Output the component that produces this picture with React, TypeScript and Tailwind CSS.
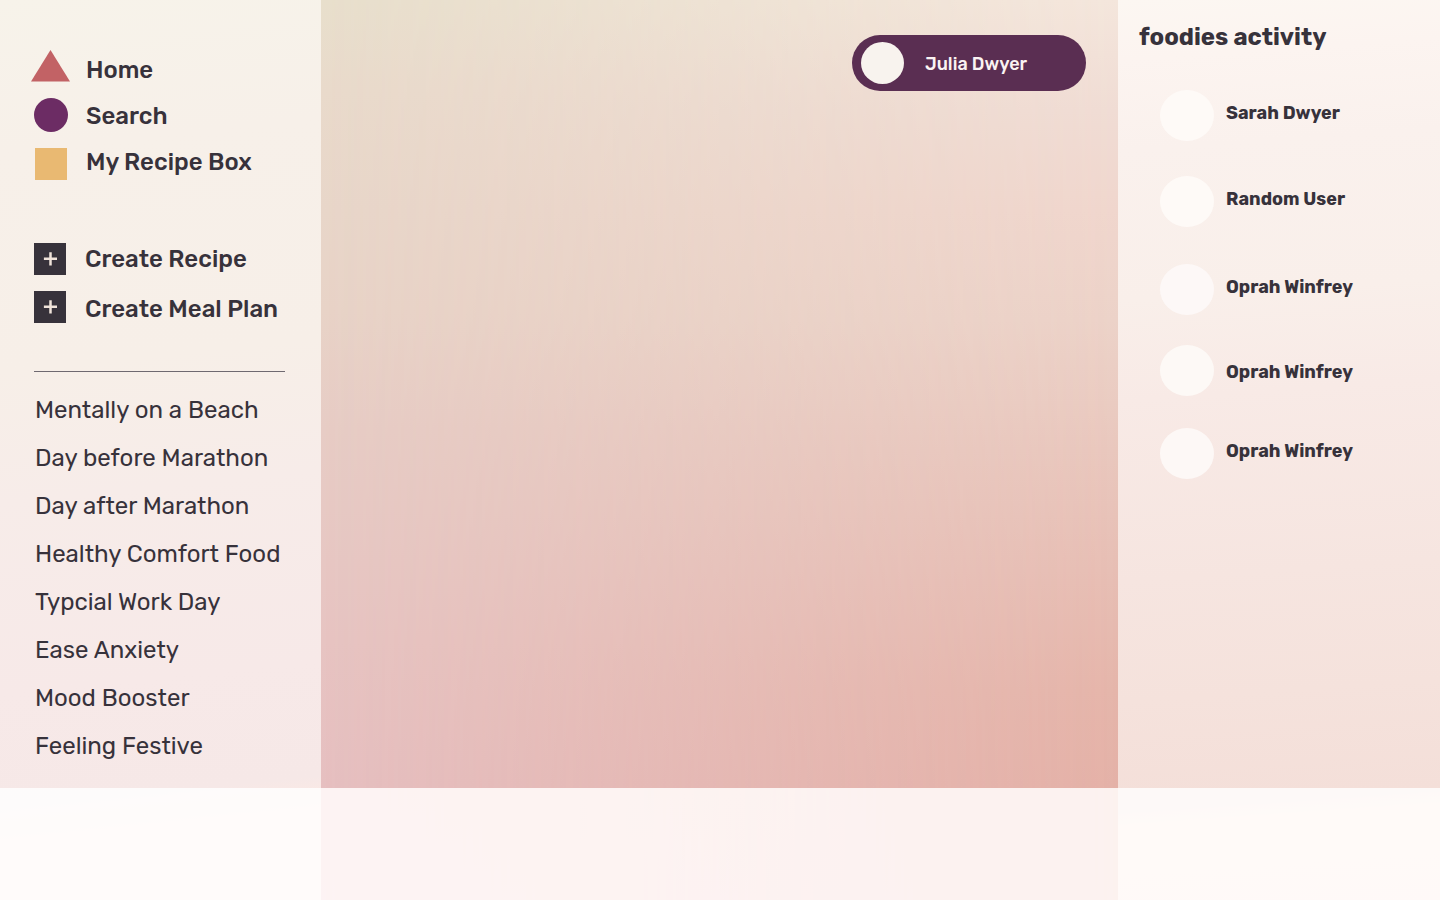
const primary = ["Home", "Search", "My Recipe Box"];

const create = ["Create Recipe", "Create Meal Plan"];

const collections = [
  "Mentally on a Beach",
  "Day before Marathon",
  "Day after Marathon",
  "Healthy Comfort Food",
  "Typcial Work Day",
  "Ease Anxiety",
  "Mood Booster",
  "Feeling Festive",
];

const friends = [
  { name: "Sarah Dwyer", row: "mt-[38px]", text: "mt-[11px]", avatar: "bg-[#fefaf7]" },
  { name: "Random User", row: "mt-[35px]", text: "mt-[11px]", avatar: "bg-[#fefaf7]" },
  { name: "Oprah Winfrey", row: "mt-[37px]", text: "mt-[11px]", avatar: "bg-[#fdf8f7]" },
  { name: "Oprah Winfrey", row: "mt-[30px]", text: "mt-[15px]", avatar: "bg-[#fdf9f6]" },
  { name: "Oprah Winfrey", row: "mt-[32px]", text: "mt-[11px]", avatar: "bg-[#fdf8f6]" },
];

function PlusTile() {
  return (
    <div className="size-8 bg-[#37323b]">
      <svg width="32" height="32" viewBox="0 0 32 32" fill="none" stroke="#f0e3da" strokeWidth="2.5">
        <path d="M9.9 15.8H23M16.5 9.2V22.4" />
      </svg>
    </div>
  );
}

function Sidebar() {
  return (
    <aside className="h-[900px] bg-[linear-gradient(174deg,#f7f3ea_0px,#f7f0e9_150px,#f7efe8_370px,#f7ece9_500px,#f7e9e8_690px,#f6e8e7_805px,#fee9e2_840px,#fee8e2_930px)]">
      <nav className="flex gap-4 pl-[31px] pt-[50px]">
        <div className="flex w-[39px] flex-col items-center gap-4">
          <svg width="39" height="32" viewBox="0 0 39 32">
            <path d="M19.5 0L39 31.6H0Z" fill="#c26265" />
          </svg>
          <div className="size-[34px] rounded-full bg-[#6c2c64]" />
          <div className="size-8 bg-[#e9b972]" />
        </div>
        <ul className="flex flex-col gap-[22px] pt-2">
          {primary.map((label) => (
            <li key={label} className="whitespace-nowrap text-2xl/6 font-medium">
              {label}
            </li>
          ))}
        </ul>
      </nav>
      <div className="mt-[63px] flex gap-[19px] pl-[34px]">
        <div className="flex flex-col gap-4">
          <PlusTile />
          <PlusTile />
        </div>
        <ul className="flex flex-col gap-[26px] pt-1">
          {create.map((label) => (
            <li key={label} className="whitespace-nowrap text-2xl/6 font-medium">
              {label}
            </li>
          ))}
        </ul>
      </div>
      <div className="ml-[34px] mt-12 h-px w-[251px] bg-[#6f6970]" />
      <ul className="mt-[26px] flex flex-col gap-6 pl-[35px]">
        {collections.map((label) => (
          <li key={label} className="whitespace-nowrap text-2xl/6">
            {label}
          </li>
        ))}
      </ul>
    </aside>
  );
}

function Stage() {
  return (
    <main className="grid h-[900px] bg-[linear-gradient(180deg,#e8dfcc_0px,#e9dacb_90px,#e8d6c9_210px,#e8d3c7_310px,#e7ccc5_430px,#e7c4c2_640px,#e6bfc0_788px,#f4bfbc_789px,#f6bec0_900px)]">
      <div className="col-start-1 row-start-1 bg-[linear-gradient(180deg,#f4e6dc_0px,#f0dcd4_110px,#f0d6cd_210px,#ecd2c8_320px,#e9c7bd_450px,#e7beb4_570px,#e5b5aa_690px,#e4b1a7_788px,#efb6a8_789px,#eeb4a8_900px)] [mask-image:linear-gradient(90deg,transparent,black)]" />
      <div className="z-10 col-start-1 row-start-1 flex justify-end pr-8 pt-[35px]">
        <div className="flex h-14 w-[234px] items-center rounded-full bg-[#5a2e52] pl-[9px]">
          <div className="h-[42px] w-[43px] rounded-[50%] bg-[#f8f3ee]" />
          <span className="ml-[21px] whitespace-nowrap pt-0.5 text-lg/6 font-medium text-[#faf3f3]">
            Julia Dwyer
          </span>
        </div>
      </div>
    </main>
  );
}

function Activity() {
  return (
    <aside className="h-[900px] bg-[linear-gradient(176deg,#fcf7f2_0px,#fcf4f0_60px,#faf1ed_150px,#f9efea_300px,#f8eae6_400px,#f6e5e0_580px,#f5e2dc_700px,#f4dfd9_808px,#fee2d6_825px,#fde0d8_920px)]">
      <h2 className="pl-[21px] pt-[25px] text-2xl/6 font-bold">foodies activity</h2>
      <ul className="flex flex-col pt-[3px]">
        {friends.map((f, i) => (
          <li key={i} className={"flex gap-3 pl-[42px] " + f.row}>
            <div className={"h-[51px] w-[54px] rounded-[50%] " + f.avatar} />
            <span className={"whitespace-nowrap text-lg/6 font-bold " + f.text}>{f.name}</span>
          </li>
        ))}
      </ul>
    </aside>
  );
}

export default function App() {
  return (
    <div className="relative grid h-[900px] w-[1440px] grid-cols-[321px_797px_322px] overflow-hidden font-['Rubik','Roboto',sans-serif] text-[#37323b]">
      <Sidebar />
      <Stage />
      <Activity />
      <div className="absolute inset-x-0 bottom-0 z-20 h-28 bg-white/82" />
    </div>
  );
}
